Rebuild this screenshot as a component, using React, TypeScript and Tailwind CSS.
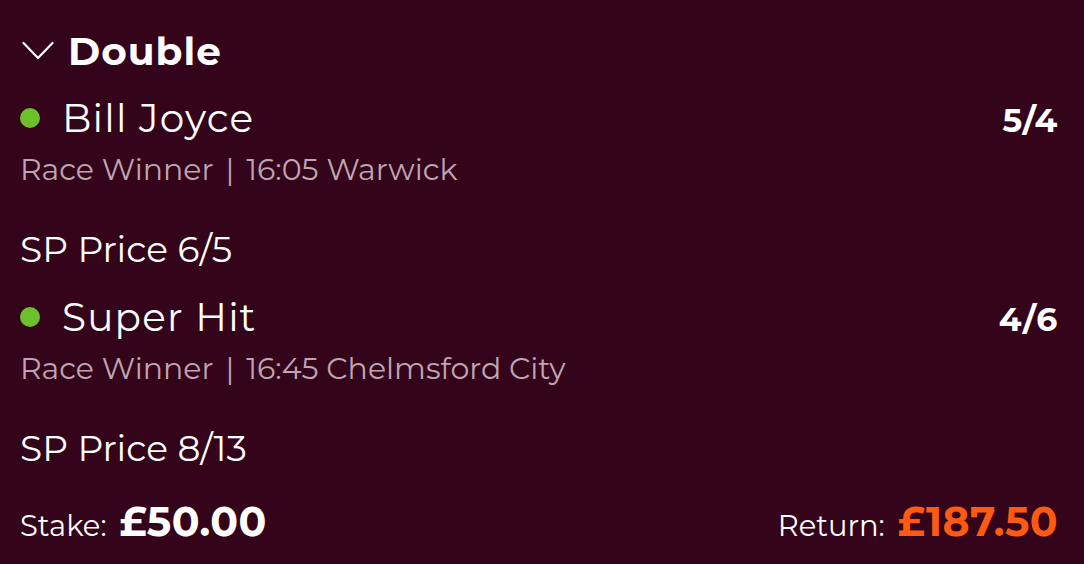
import React from "react";

const font = { fontFamily: "Montserrat, Inter, 'Noto Sans', sans-serif" };

function Selection({ name, odds, market, event, sp, mt }: { name: string; odds: string; market: string; event: string; sp: string; mt: string }) {
  return (
    <div className={"flex flex-col " + mt}>
      <div className="flex items-baseline justify-between">
        <div className="flex items-baseline">
          <span className="h-[20px] w-[20px] self-center rounded-full bg-[#6cc12b]" />
          <span className="ml-[22px] text-[39px] leading-[44px] tracking-[1.2px] text-white">{name}</span>
        </div>
        <span className="text-[33px] font-bold leading-[44px] tracking-[0.8px] text-white">{odds}</span>
      </div>
      <div className="mt-[11px] flex text-[30px] leading-[34px] text-[#bfa5b2]">
        <span>{market}</span>
        <span className="mx-[12px]">|</span>
        <span>{event}</span>
      </div>
      <div className="mt-[42px] text-[36px] leading-[40px] text-white">{sp}</div>
    </div>
  );
}

export default function App() {
  return (
    <div className="h-[564px] w-[1084px] overflow-hidden bg-[#33041a] pl-[20px] pr-[26px] pt-[31px]" style={font}>
      <div className="flex h-[40px] items-center">
        <svg width="32" height="20" viewBox="0 0 32 20" className="ml-[2px]">
          <path d="M1.5 2 L16 17 L30.5 2" fill="none" stroke="white" strokeWidth="2.2" strokeLinecap="round" strokeLinejoin="round" />
        </svg>
        <span className="ml-[14px] text-[39px] font-bold leading-[40px] tracking-[1px] text-white">Double</span>
      </div>
      <Selection mt="mt-[25px]" name="Bill Joyce" odds="5/4" market="Race Winner" event="16:05 Warwick" sp="SP Price 6/5" />
      <Selection mt="mt-[26px]" name="Super Hit" odds="4/6" market="Race Winner" event="16:45 Chelmsford City" sp="SP Price 8/13" />
      <div className="mt-[30px] flex items-baseline justify-between leading-[46px]">
        <div className="flex items-baseline">
          <span className="text-[29px] text-white">Stake:</span>
          <span className="ml-[13px] text-[41px] font-bold tracking-[0.5px] text-white">£50.00</span>
        </div>
        <div className="flex items-baseline">
          <span className="text-[29px] text-white">Return:</span>
          <span className="ml-[13px] text-[41px] font-bold tracking-[0.4px] text-[#ff5a12]">£187.50</span>
        </div>
      </div>
    </div>
  );
}
